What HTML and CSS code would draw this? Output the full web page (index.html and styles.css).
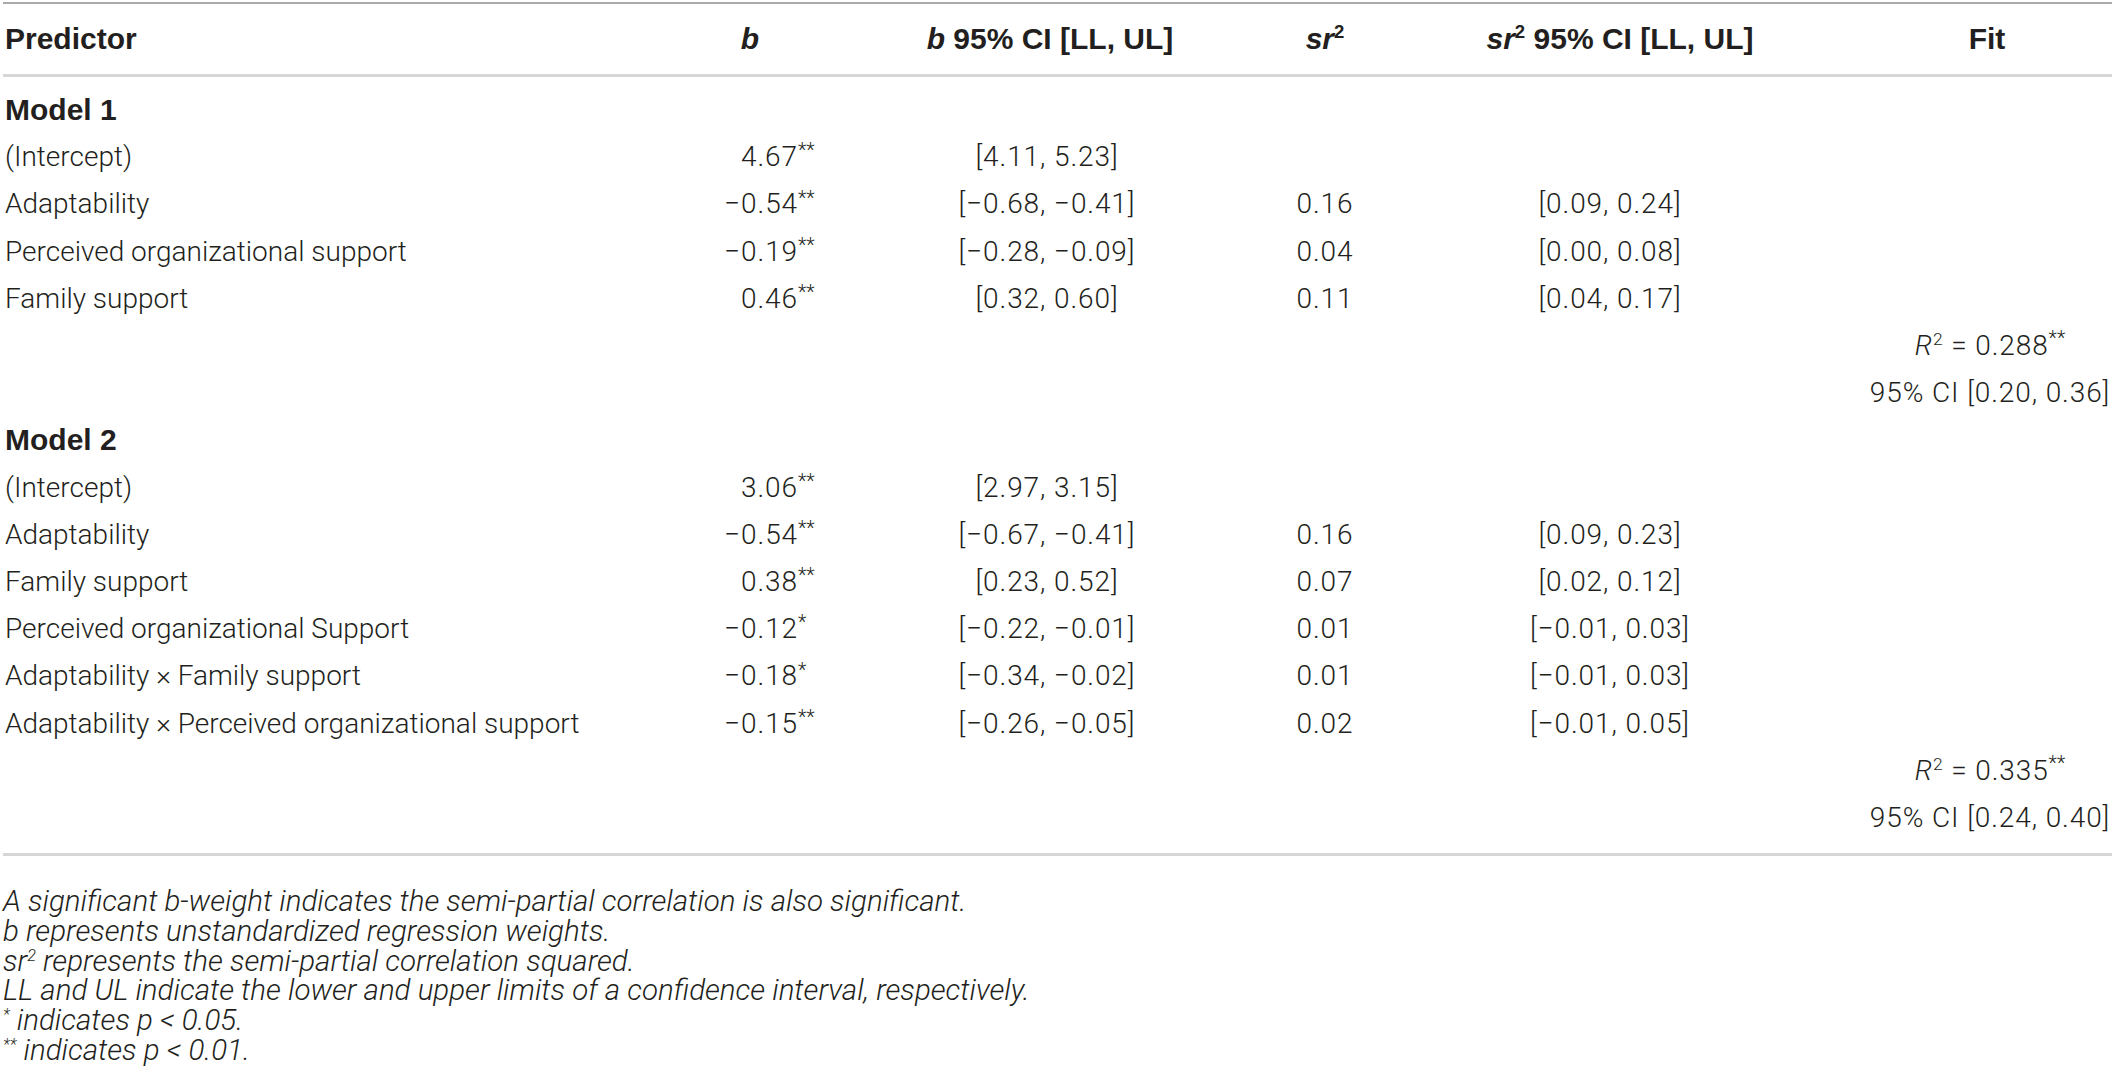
FILE: index.html
```html
<!DOCTYPE html>
<html>
<head>
  <title>Hierarchical regression results</title>
  <link rel="stylesheet" href="styles.css">
</head>
<body>
  <div class="page">
    <table class="results">
      <colgroup>
        <col class="c-pred">
        <col class="c-b">
        <col class="c-bci">
        <col class="c-sr">
        <col class="c-srci">
        <col class="c-fit">
      </colgroup>
      <thead>
        <tr>
          <th class="left">Predictor</th>
          <th><i>b</i></th>
          <th class="bci-head"><i>b</i> 95% CI [LL, UL]</th>
          <th><i>sr</i><sup>2</sup></th>
          <th><i>sr</i><sup>2</sup> 95% CI [LL, UL]</th>
          <th class="fit-head">Fit</th>
        </tr>
      </thead>
      <tbody>
        <!-- Model 1 -->
        <tr class="first">
          <td class="model">Model 1</td>
          <td></td><td></td><td></td><td></td><td></td>
        </tr>
        <tr>
          <td class="left">(Intercept)</td>
          <td class="num">4.67<span class="st">**</span></td>
          <td class="bci">[4.11, 5.23]</td>
          <td></td><td></td><td></td>
        </tr>
        <tr>
          <td class="left">Adaptability</td>
          <td class="num">&minus;0.54<span class="st">**</span></td>
          <td class="bci">[&minus;0.68, &minus;0.41]</td>
          <td>0.16</td>
          <td class="srci">[0.09, 0.24]</td>
          <td></td>
        </tr>
        <tr>
          <td class="left">Perceived organizational support</td>
          <td class="num">&minus;0.19<span class="st">**</span></td>
          <td class="bci">[&minus;0.28, &minus;0.09]</td>
          <td>0.04</td>
          <td class="srci">[0.00, 0.08]</td>
          <td></td>
        </tr>
        <tr>
          <td class="left">Family support</td>
          <td class="num">0.46<span class="st">**</span></td>
          <td class="bci">[0.32, 0.60]</td>
          <td>0.11</td>
          <td class="srci">[0.04, 0.17]</td>
          <td></td>
        </tr>
        <tr>
          <td></td><td></td><td></td><td></td><td></td>
          <td class="fit"><i>R</i><sup>2</sup> = 0.288<sup class="star">**</sup></td>
        </tr>
        <tr>
          <td></td><td></td><td></td><td></td><td></td>
          <td class="fit">95% CI [0.20, 0.36]</td>
        </tr>

        <!-- Model 2 -->
        <tr>
          <td class="model">Model 2</td>
          <td></td><td></td><td></td><td></td><td></td>
        </tr>
        <tr>
          <td class="left">(Intercept)</td>
          <td class="num">3.06<span class="st">**</span></td>
          <td class="bci">[2.97, 3.15]</td>
          <td></td><td></td><td></td>
        </tr>
        <tr>
          <td class="left">Adaptability</td>
          <td class="num">&minus;0.54<span class="st">**</span></td>
          <td class="bci">[&minus;0.67, &minus;0.41]</td>
          <td>0.16</td>
          <td class="srci">[0.09, 0.23]</td>
          <td></td>
        </tr>
        <tr>
          <td class="left">Family support</td>
          <td class="num">0.38<span class="st">**</span></td>
          <td class="bci">[0.23, 0.52]</td>
          <td>0.07</td>
          <td class="srci">[0.02, 0.12]</td>
          <td></td>
        </tr>
        <tr>
          <td class="left">Perceived organizational Support</td>
          <td class="num">&minus;0.12<span class="st">*</span></td>
          <td class="bci">[&minus;0.22, &minus;0.01]</td>
          <td>0.01</td>
          <td class="srci">[&minus;0.01, 0.03]</td>
          <td></td>
        </tr>
        <tr>
          <td class="left">Adaptability &times; Family support</td>
          <td class="num">&minus;0.18<span class="st">*</span></td>
          <td class="bci">[&minus;0.34, &minus;0.02]</td>
          <td>0.01</td>
          <td class="srci">[&minus;0.01, 0.03]</td>
          <td></td>
        </tr>
        <tr>
          <td class="left">Adaptability &times; Perceived organizational support</td>
          <td class="num">&minus;0.15<span class="st">**</span></td>
          <td class="bci">[&minus;0.26, &minus;0.05]</td>
          <td>0.02</td>
          <td class="srci">[&minus;0.01, 0.05]</td>
          <td></td>
        </tr>
        <tr>
          <td></td><td></td><td></td><td></td><td></td>
          <td class="fit"><i>R</i><sup>2</sup> = 0.335<sup class="star">**</sup></td>
        </tr>
        <tr class="last">
          <td></td><td></td><td></td><td></td><td></td>
          <td class="fit">95% CI [0.24, 0.40]</td>
        </tr>
      </tbody>
    </table>

    <!-- Table notes -->
    <div class="notes">
      <p>A significant b-weight indicates the semi-partial correlation is also significant.</p>
      <p>b represents unstandardized regression weights.</p>
      <p>sr<span class="up">2</span> represents the semi-partial correlation squared.</p>
      <p>LL and UL indicate the lower and upper limits of a confidence interval, respectively.</p>
      <p><span class="up">*</span> indicates p &lt; 0.05.</p>
      <p><span class="up">**</span> indicates p &lt; 0.01.</p>
    </div>
  </div>
</body>
</html>
```

FILE: styles.css
```css
/* Page */
body {
  margin: 0;
  background-color: #fff;
  color: #231f20;
  font-family: "Roboto", "Liberation Sans", sans-serif;
  font-weight: 300;
}

.page {
  padding: 2px 3px 0;
}

/* Table layout */
.results {
  width: 2109px;
  border-collapse: collapse;
  table-layout: fixed;
  font-size: 28px;
}

.c-pred { width: 637px; }
.c-b { width: 220px; }
.c-bci { width: 340px; }
.c-sr { width: 250px; }
.c-srci { width: 340px; }
.c-fit { width: 322px; }

/* Header row */
th {
  height: 70px;
  padding: 0;
  font-family: "Liberation Sans", Arial, sans-serif;
  font-weight: bold;
  font-size: 30px;
  text-align: center;
  white-space: nowrap;
  border-top: 2px solid #a9a9a9;
  border-bottom: 3px solid #d6d6d6;
}

th sup {
  font-size: 0.62em;
  line-height: 0;
}

.bci-head {
  padding-left: 40px;
}

.fit-head {
  padding-left: 72px;
}

/* Body rows */
td {
  height: 47.2px;
  padding: 0;
  text-align: center;
  white-space: nowrap;
  letter-spacing: 0.9px;
}

tr.first td {
  padding-top: 9px;
}

tr.last td {
  padding-bottom: 12px;
  border-bottom: 3px solid #d6d6d6;
}

.left {
  text-align: left;
  padding-left: 2px;
  letter-spacing: 0;
}

.model {
  text-align: left;
  padding-left: 2px;
  letter-spacing: 0;
  font-family: "Liberation Sans", Arial, sans-serif;
  font-weight: bold;
  font-size: 30px;
}

/* b column: numbers right aligned, stars hang after */
.num {
  text-align: right;
  padding-right: 40px;
}

.st {
  display: inline-block;
  width: 22px;
  text-align: left;
  font-size: 0.7em;
  vertical-align: 0.45em;
  line-height: 1;
  letter-spacing: 0;
}

.bci {
  padding-left: 34px;
}

.srci {
  padding-right: 20px;
}

.fit {
  padding-left: 78px;
}

td sup {
  font-size: 0.62em;
  line-height: 0;
}

sup.star {
  font-size: 0.7em;
  letter-spacing: 0;
}

/* Notes under the table */
.notes {
  margin-top: 31px;
  font-size: 29.5px;
  font-style: italic;
}

.notes p {
  margin: 0;
  line-height: 29.8px;
}

/* raised marks kept inside the line's own height */
.notes .up {
  display: inline-block;
  font-size: 0.55em;
  line-height: 1;
  vertical-align: top;
  margin-top: 1px;
}
```
